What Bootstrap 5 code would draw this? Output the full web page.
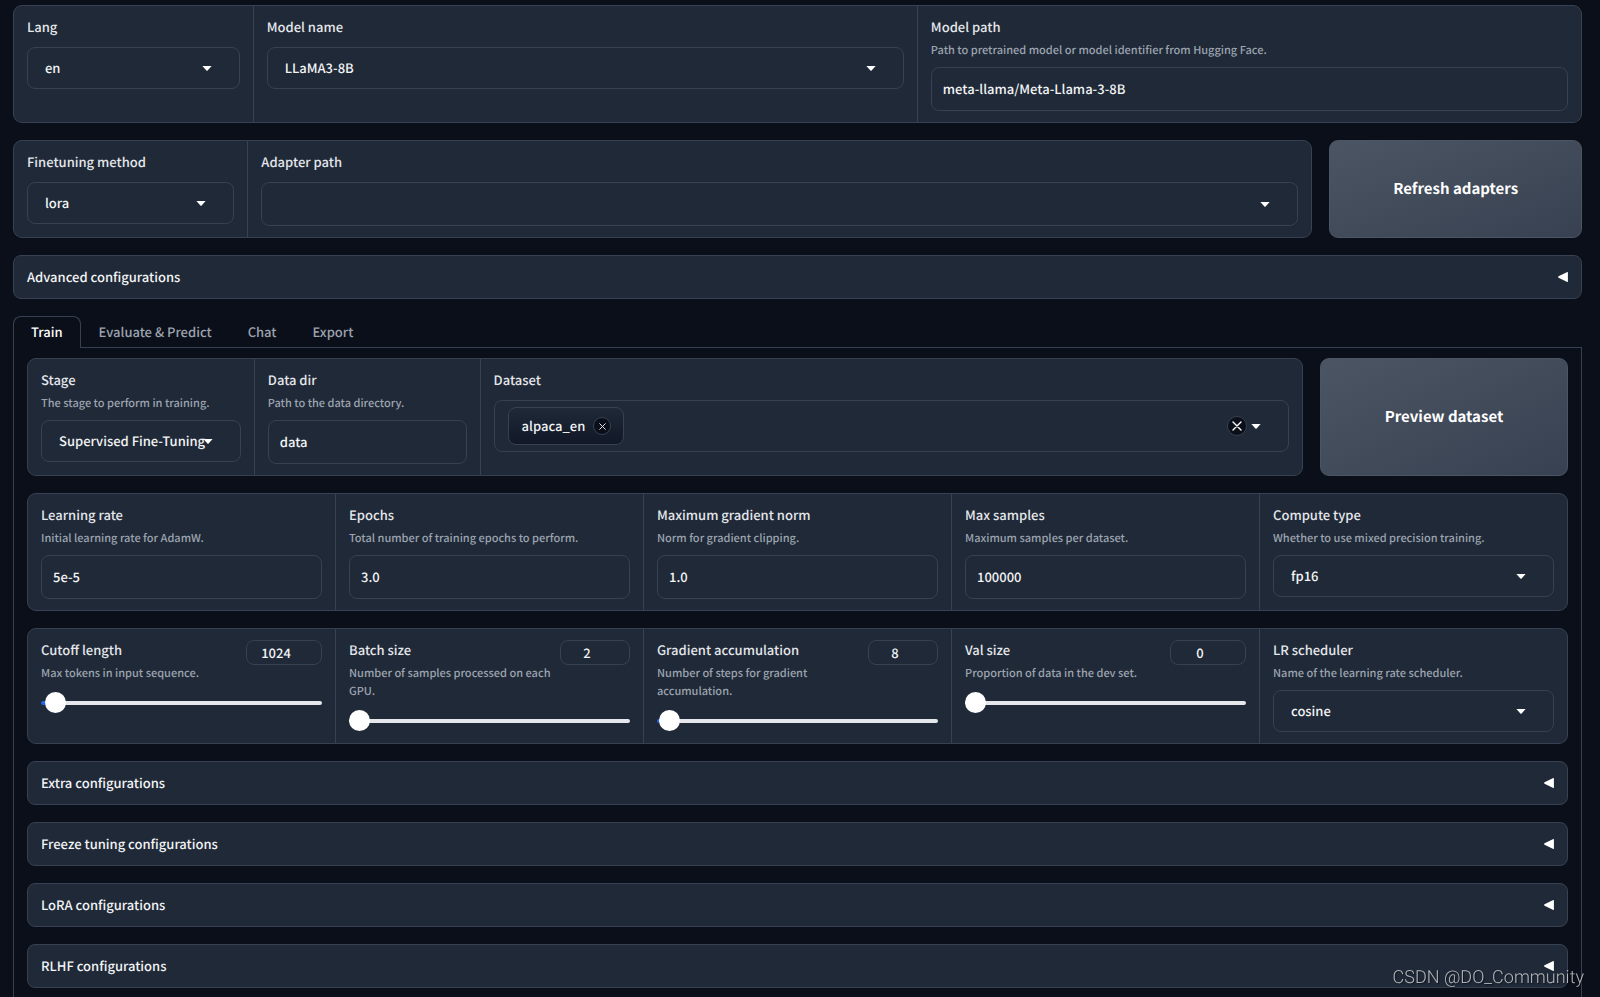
<!DOCTYPE html>
<html lang="en">
<head>
<meta charset="utf-8">
<meta name="viewport" content="width=device-width, initial-scale=1">
<title>LLaMA Board</title>
<link href="https://cdn.jsdelivr.net/npm/bootstrap@5.3.0/dist/css/bootstrap.min.css" rel="stylesheet">
<style>
  :root {
    --page: #0b0f19;
    --block: #1f2937;
    --line: #374151;
    --text: #f3f4f6;
    --muted: #9ca3af;
  }
  body {
    background: var(--page);
    color: var(--text);
    font-family: "Noto Sans CJK SC", "Noto Sans", sans-serif;
    font-size: 13px;
    font-weight: 500;
    line-height: 20px;
    text-rendering: geometricPrecision;
    padding: 5px 18px 0 13px;
  }
  button, input, select { font-weight: inherit; text-rendering: inherit; }
  .stack { display: flex; flex-direction: column; gap: 17px; }
  .blocks {
    display: grid;
    gap: 1px;
    background: var(--line);
    border: 1px solid var(--line);
    border-radius: 9px;
    overflow: hidden;
  }
  .cell { background: var(--block); padding: 11px 13px; min-width: 0; }
  .cols-model { grid-template-columns: 9fr 25fr 25fr; }
  .cols-adapter { grid-template-columns: 9fr 41fr; }
  .cols-data { grid-template-columns: 226fr 225fr 822fr; }
  .cols-five { grid-template-columns: repeat(5, 1fr); }
  .with-action { display: grid; grid-template-columns: 36fr 7fr; gap: 17px; }

  .cell label { display: block; color: #e5e7eb; }
  .hint { color: var(--muted); font-size: 11px; line-height: 18px; margin: 4px 0 0; }
  .field {
    display: block;
    width: 100%;
    height: 44px;
    margin-top: 10px;
    padding: 0 11px 2px;
    background-color: var(--block);
    color: var(--text);
    border: 1px solid var(--line);
    border-radius: 8px;
    font-size: 13px;
    line-height: 20px;
  }
  .hint + .field { margin-top: 8px; }
  select.field {
    appearance: none;
    height: 42px;
    padding: 0 16px 0 17px;
    background-image: url("data:image/svg+xml,%3Csvg xmlns='http://www.w3.org/2000/svg' width='10' height='6'%3E%3Cpath d='M.4 1h9.2L5.600 5.400q-.6.500-1.200 0z' fill='%23fff'/%3E%3C/svg%3E");
    background-repeat: no-repeat;
    background-position: right 27px center;
  }
  select.field.tall { height: 44px; }
  .tokens { height: 52px; padding: 0 27px 0 13px; }
  .token {
    height: 38px;
    padding: 0 12px 0 13px;
    border: 1px solid var(--line);
    border-radius: 8px;
    background: linear-gradient(to bottom, #1f2937, #111827);
  }
  .round {
    display: flex;
    align-items: center;
    justify-content: center;
    width: 20px;
    height: 20px;
    padding: 0;
    border: 1px solid var(--line);
    border-radius: 50%;
    background: var(--page);
    color: #fff;
  }
  .round.sm { width: 18px; height: 18px; color: #e5e7eb; }
  .bare { padding: 0; border: 0; background: none; color: #fff; line-height: 0; }

  .action {
    border: 1px solid #4b5563;
    border-radius: 9px;
    background: linear-gradient(to bottom right, #4b5563, #374151);
    color: #fff;
    font-size: 15px;
    font-weight: 700;
  }
  .fold {
    display: flex;
    align-items: center;
    justify-content: space-between;
    width: 100%;
    height: 44px;
    padding: 0 13px;
    background: var(--block);
    border: 1px solid var(--line);
    border-radius: 8px;
    color: var(--text);
    text-align: left;
  }
  .tab-strip { gap: 0; margin-bottom: -1px; position: relative; }
  .tab-strip button {
    height: 32px;
    padding: 0 17px 1px;
    border: 1px solid transparent;
    border-bottom: 0;
    border-radius: 8px 8px 0 0;
    background: none;
    color: var(--muted);
  }
  .tab-strip button.active { background: var(--page); border-color: var(--line); color: #fff; }
  .tab-body { border: 1px solid var(--line); border-bottom: 0; padding: 10px 13px 8px; }

  .num {
    height: 25px;
    width: 76px;
    padding: 0 16px 0 0;
    background: var(--block);
    color: var(--text);
    border: 1px solid var(--line);
    border-radius: 8px;
    text-align: center;
    appearance: textfield;
    flex: none;
  }
  .num.slim { width: 70px; }
  .num::-webkit-inner-spin-button { display: none; }
  .slide {
    appearance: none;
    display: block;
    width: 100%;
    height: 20px;
    margin: 11px 0 0;
    background: none;
  }
  .slide::-webkit-slider-runnable-track {
    height: 4px;
    border-radius: 2px;
    background: linear-gradient(#2563eb, #2563eb) left / var(--fill) 100% no-repeat #e5e7eb;
  }
  .slide::-webkit-slider-thumb {
    appearance: none;
    width: 21px;
    height: 21px;
    margin-top: -9px;
    border-radius: 50%;
    background: #fff;
  }
  .watermark {
    position: fixed;
    right: 16px;
    bottom: 7px;
    color: rgba(215, 218, 222, .8);
    text-shadow: 1px 1px 1px rgba(0, 0, 0, .5);
    font-family: Roboto, "Liberation Sans", sans-serif;
    font-size: 18px;
    font-weight: 300;
    line-height: 24px;
    pointer-events: none;
  }
</style>
</head>
<body class="d-flex flex-column min-vh-100">
<svg class="d-none" aria-hidden="true">
  <symbol id="x" viewBox="0 0 10 10"><path d="M1 1l8 8M9 1l-8 8" stroke="currentColor" stroke-width="1.4" stroke-linecap="round"/></symbol>
  <symbol id="left" viewBox="0 0 10 10"><path d="M9.9.6v8.800q0 .6-.6.500L.5 5.700Q-.3 5 .5 4.300L9.300.1q.6-.1.6.500z" fill="#fff"/></symbol>
  <symbol id="down" viewBox="0 0 10 6"><path d="M.4 1h9.200L5.600 5.400q-.6.500-1.200 0z" fill="#fff"/></symbol>
</svg>

<main class="d-flex flex-column flex-grow-1">
  <div class="stack">
    <div class="blocks cols-model">
      <div class="cell"><label for="lang">Lang</label>
        <select class="field" id="lang"><option>en</option></select></div>
      <div class="cell"><label for="model">Model name</label>
        <select class="field" id="model"><option>LLaMA3-8B</option></select></div>
      <div class="cell"><label for="mpath">Model path</label>
        <p class="hint">Path to pretrained model or model identifier from Hugging Face.</p>
        <input class="field" id="mpath" type="text" value="meta-llama/Meta-Llama-3-8B"></div>
    </div>

    <div class="with-action">
      <div class="blocks cols-adapter">
        <div class="cell"><label for="ft">Finetuning method</label>
          <select class="field" id="ft"><option>lora</option></select></div>
        <div class="cell"><label for="adapter">Adapter path</label>
          <select class="field tall" id="adapter"><option></option></select></div>
      </div>
      <button class="action" type="button">Refresh adapters</button>
    </div>

    <button class="fold" type="button">Advanced configurations <svg width="10" height="10"><use href="#left"/></svg></button>

    <div class="d-flex tab-strip" role="tablist">
      <button class="active" type="button" role="tab">Train</button>
      <button type="button" role="tab">Evaluate &amp; Predict</button>
      <button type="button" role="tab">Chat</button>
      <button type="button" role="tab">Export</button>
    </div>
  </div>

  <section class="tab-body stack flex-grow-1">
    <div class="with-action">
      <div class="blocks cols-data">
        <div class="cell"><label for="stage">Stage</label>
          <p class="hint">The stage to perform in training.</p>
          <select class="field" id="stage"><option>Supervised Fine-Tuning</option></select></div>
        <div class="cell"><label for="dir">Data dir</label>
          <p class="hint">Path to the data directory.</p>
          <input class="field" id="dir" type="text" value="data"></div>
        <div class="cell"><label id="dataset">Dataset</label>
          <div class="field tokens d-flex align-items-center" role="group" aria-labelledby="dataset">
            <span class="token d-flex align-items-center gap-2">alpaca_en
              <button class="round sm" type="button" aria-label="Remove"><svg width="7" height="7"><use href="#x"/></svg></button></span>
            <button class="round ms-auto me-1" type="button" aria-label="Clear"><svg width="10" height="10"><use href="#x"/></svg></button>
            <button class="bare" type="button" aria-label="Open"><svg width="10" height="6"><use href="#down"/></svg></button>
          </div></div>
      </div>
      <button class="action" type="button">Preview dataset</button>
    </div>

    <div class="blocks cols-five">
      <div class="cell"><label for="lr">Learning rate</label>
        <p class="hint">Initial learning rate for AdamW.</p>
        <input class="field" id="lr" type="text" value="5e-5"></div>
      <div class="cell"><label for="ep">Epochs</label>
        <p class="hint">Total number of training epochs to perform.</p>
        <input class="field" id="ep" type="text" value="3.0"></div>
      <div class="cell"><label for="gn">Maximum gradient norm</label>
        <p class="hint">Norm for gradient clipping.</p>
        <input class="field" id="gn" type="text" value="1.0"></div>
      <div class="cell"><label for="ms">Max samples</label>
        <p class="hint">Maximum samples per dataset.</p>
        <input class="field" id="ms" type="text" value="100000"></div>
      <div class="cell"><label for="ct">Compute type</label>
        <p class="hint">Whether to use mixed precision training.</p>
        <select class="field" id="ct"><option>fp16</option></select></div>
    </div>

    <div class="blocks cols-five">
      <div class="cell">
        <div class="d-flex align-items-start gap-1">
          <div class="flex-grow-1"><label for="cl">Cutoff length</label>
            <p class="hint">Max tokens in input sequence.</p></div>
          <input class="num" id="cl" type="number" value="1024">
        </div>
        <input class="slide" style="--fill:2%" type="range" aria-label="Cutoff length" min="4" max="65536" value="1024">
      </div>
      <div class="cell">
        <div class="d-flex align-items-start gap-1">
          <div class="flex-grow-1"><label for="bs">Batch size</label>
            <p class="hint">Number of samples processed on each GPU.</p></div>
          <input class="num slim" id="bs" type="number" value="2">
        </div>
        <input class="slide" style="--fill:0%" type="range" aria-label="Batch size" min="1" max="1024" value="2">
      </div>
      <div class="cell">
        <div class="d-flex align-items-start gap-1">
          <div class="flex-grow-1"><label for="ga">Gradient accumulation</label>
            <p class="hint">Number of steps for gradient accumulation.</p></div>
          <input class="num slim" id="ga" type="number" value="8">
        </div>
        <input class="slide" style="--fill:1%" type="range" aria-label="Gradient accumulation" min="1" max="1024" value="8">
      </div>
      <div class="cell">
        <div class="d-flex align-items-start gap-1">
          <div class="flex-grow-1"><label for="vs">Val size</label>
            <p class="hint">Proportion of data in the dev set.</p></div>
          <input class="num" id="vs" type="number" value="0">
        </div>
        <input class="slide" style="--fill:0%" type="range" aria-label="Val size" min="0" max="1" step="0.001" value="0">
      </div>
      <div class="cell"><label for="sch">LR scheduler</label>
        <p class="hint">Name of the learning rate scheduler.</p>
        <select class="field" id="sch"><option>cosine</option></select></div>
    </div>

    <button class="fold" type="button">Extra configurations <svg width="10" height="10"><use href="#left"/></svg></button>
    <button class="fold" type="button">Freeze tuning configurations <svg width="10" height="10"><use href="#left"/></svg></button>
    <button class="fold" type="button">LoRA configurations <svg width="10" height="10"><use href="#left"/></svg></button>
    <button class="fold" type="button">RLHF configurations <svg width="10" height="10"><use href="#left"/></svg></button>
  </section>
</main>
<div class="watermark">CSDN @DO_Community</div>
<script src="https://cdn.jsdelivr.net/npm/bootstrap@5.3.0/dist/js/bootstrap.bundle.min.js"></script>
</body>
</html>
